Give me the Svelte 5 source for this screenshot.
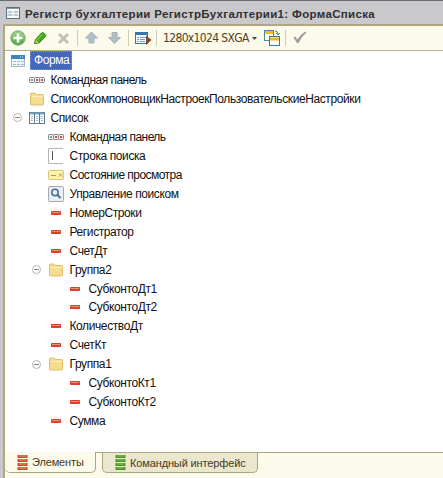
<script>
  const rows = [
    { d: 0, icon: 'form', text: 'Форма', selected: true },
    { d: 1, icon: 'bar', text: 'Командная панель', tight: true },
    { d: 1, icon: 'folder', text: 'СписокКомпоновщикНастроекПользовательскиеНастройки' },
    { d: 1, icon: 'list', text: 'Список', open: true },
    { d: 2, icon: 'bar', text: 'Командная панель', tight: true },
    { d: 2, icon: 'input', text: 'Строка поиска' },
    { d: 2, icon: 'state', text: 'Состояние просмотра', tight: true },
    { d: 2, icon: 'search', text: 'Управление поиском' },
    { d: 2, icon: 'field', text: 'НомерСтроки' },
    { d: 2, icon: 'field', text: 'Регистратор' },
    { d: 2, icon: 'field', text: 'СчетДт' },
    { d: 2, icon: 'folder', text: 'Группа2', open: true },
    { d: 3, icon: 'field', text: 'СубконтоДт1' },
    { d: 3, icon: 'field', text: 'СубконтоДт2' },
    { d: 2, icon: 'field', text: 'КоличествоДт' },
    { d: 2, icon: 'field', text: 'СчетКт' },
    { d: 2, icon: 'folder', text: 'Группа1', open: true },
    { d: 3, icon: 'field', text: 'СубконтоКт1' },
    { d: 3, icon: 'field', text: 'СубконтоКт2' },
    { d: 2, icon: 'field', text: 'Сумма' }
  ];
</script>

{#snippet icon(name)}
  <svg class="icon" width="16" height="16" viewBox="0 0 16 16">
    {#if name === 'form'}
      <rect x="1.5" y="2.5" width="13" height="11" fill="#eef6fa" stroke="#a3bac6" />
      <rect x="1" y="2" width="14" height="4" fill="#3c85bd" />
      <path d="M10 4h1m1 0h1" stroke="#d9eefb" />
      <path d="M3 8.5h3m1 0h3m1 0h3M3 11.500h3m1 0h3m1 0h3" stroke="#9bbccc" />
    {:else if name === 'bar'}
      {#each [['#6d9fc0', 0], ['#c8503a', 5], ['#c8503a', 10]] as [color, x]}
        <rect x={x + 0.5} y="5.500" width="5" height="5" rx="1" fill="#f4f0ee" stroke="#858085" />
        <rect x={x + 2} y="7" width="2" height="2" fill={color} />
      {/each}
    {:else if name === 'folder'}
      <path d="M1.500 13v-10q0-1 1-1h3.500l1.500 1.500h6q1 0 1 1v8.500q0 1-1 1h-11q-1 0-1-1z" fill="#f5dc8e" stroke="#dcbd68" />
      <path d="M2.500 5.500h11" stroke="#fff1bd" />
    {:else if name === 'list'}
      <rect x=".5" y="2.500" width="15" height="11" fill="#fff" stroke="#5b7f9a" />
      <path d="M1 3.500h14" stroke="#7ba5c2" stroke-width="2" />
      <path d="M5.500 3v11M10.500 3v11" stroke="#5b7f9a" />
      <path d="M2 6.500h2m3 0h2m3 0h2M2 8.500h2m3 0h2m3 0h2M2 10.500h2m3 0h2m3 0h2" stroke="#a9b9c4" />
    {:else if name === 'input'}
      <path d="M15 .5H.5v15H15" fill="none" stroke="#b5b5b5" />
      <path d="M4.500 3v9" stroke="#555" />
    {:else if name === 'state'}
      <rect x=".5" y="3.500" width="15" height="9" rx="1.500" fill="#fff3ab" stroke="#dac574" />
      <path d="M3 8.500h5m3-2 3 3m0-3-3 3" fill="none" stroke="#b19c55" />
    {:else if name === 'search'}
      <rect x=".5" y=".5" width="15" height="15" rx="1" fill="#eceff1" stroke="#a3a9ad" />
      <circle cx="7" cy="6.500" r="3.200" fill="#e4f2fa" stroke="#446f96" stroke-width="1.500" />
      <path d="m9.500 9 3 3" stroke="#446f96" stroke-width="2" />
    {:else if name === 'field'}
      <rect x="3" y="6" width="10" height="4" rx=".7" fill="#d9402a" />
      <path d="M4 7.500h8" stroke="#f08d76" />
    {/if}
  </svg>
{/snippet}

{#snippet stack(color, light)}
  <svg width="11" height="15" viewBox="0 0 11 15">
    {#each [0, 4, 8, 12] as y}
      <rect x=".5" y={y} width="10" height="3" rx=".5" fill={color} />
      <path d={`M2 ${y + 1}h7`} stroke={light} />
    {/each}
  </svg>
{/snippet}

<div class="window">
  <header>
    <svg width="14" height="12" viewBox="0 0 14 12">
      <rect x=".5" y=".5" width="13" height="11" fill="#f8fafa" stroke="#557487" />
      <path d="M1 1.500h12" stroke="#8299a6" />
      <path d="M2 5.500l1-1 1 1 1-1 1 1m2 0 1-1 1 1 1-1 1 1M2 8.500l1-1 1 1 1-1 1 1m2 0 1-1 1 1 1-1 1 1" fill="none" stroke="#668394" />
    </svg>
    <h1>Регистр бухгалтерии РегистрБухгалтерии1: ФормаСписка</h1>
  </header>
  <main>
    <nav>
      <svg class="tools" width="154" height="22" viewBox="6 27 154 22">
        <defs>
          <linearGradient id="green" x2="0" y2="1"><stop stop-color="#a5d887" /><stop offset="1" stop-color="#4ba44a" /></linearGradient>
        </defs>
        <circle cx="18" cy="38" r="7.200" fill="url(#green)" stroke="#86a47a" />
        <path d="M18 33.500v9M13.500 38h9" stroke="#fff" stroke-width="2.600" />
        <path d="m34.500 43.500 1-4 6-6.500q1-1 2 0l1.800 1.600q1 1 0 2l-6.300 6.400z" fill="#43ae18" stroke="#278512" />
        <path d="m35 43 1-3 3 2.700z" fill="#e2bb68" />
        <path d="m37 40 5-5.500" stroke="#8fd95c" />
        <path d="m59 34 9 9m0-9-9 9" stroke="#c6bbb6" stroke-width="2.800" />
        <path d="M77.500 30v16M128.500 30v16M156.500 30v16" stroke="#cfcdb8" />
        <path d="m91.500 32 6 6h-3.500v5h-5v-5h-3.500z" fill="#b1bec8" stroke="#9fb1bd" />
        <path d="m114.500 43.500-6-6h3.500v-5h5v5h3.500z" fill="#b1bec8" stroke="#9fb1bd" />
        <rect x="135.500" y="32.500" width="12" height="11" fill="#f8fbff" stroke="#39759e" />
        <path d="M135 33.500h13" stroke="#3978ab" stroke-width="3" />
        <path d="M137 37.500h2m1 0h6m-9 2h2m1 0h5m-8 2h2m1 0h5" stroke="#719eb8" />
        <path d="m146 35.500 5.500 4.500-5.500 5z" fill="#7a4930" />
      </svg>
      <span class="resolution">1280x1024 SXGA</span>
      <svg class="right" width="65" height="22" viewBox="250 27 65 22">
        <path d="M252 37h5l-2.500 3z" fill="#4d4520" />
        <rect x="264.500" y="30.500" width="9" height="10" fill="#fffdf3" stroke="#4687ac" />
        <path d="M265 32.500h8" stroke="#f2bd27" stroke-width="3" />
        <rect x="269.500" y="36.500" width="10" height="9" fill="#fff" stroke="#327ca9" />
        <path d="M270 39h9" stroke="#f1b71d" stroke-width="3" />
        <path d="M275 31q3 0 3 3m-2-1 2 2 2-2" fill="none" stroke="#49935b" />
        <path d="M285.500 30v16" stroke="#cfcdb8" />
        <path d="m293.500 37.500 1.500-1 2.500 3q4-6 8-8l1 1q-5 4-8 10.500h-1.500z" fill="#a6989c" />
      </svg>
    </nav>
    <section>
      {#each rows as row}
        <div class="row depth{row.d}">
          <span class="toggle">
            {#if row.open}
              <svg width="9" height="9" viewBox="0 0 9 9"><circle cx="4.500" cy="4.500" r="4" fill="#fff" stroke="#b5b5b5" /><path d="M2 4.500h5" stroke="#888" /></svg>
            {/if}
          </span>
          {@render icon(row.icon)}
          <span class="label" class:tight={row.tight} class:selected={row.selected}>{row.text}</span>
        </div>
      {/each}
    </section>
    <footer>
      <div class="tab active">{@render stack('#d8432d', '#f4967d')}<span>Элементы</span></div>
      <div class="tab second">{@render stack('#489526', '#8bc667')}<span>Командный интерфейс</span></div>
    </footer>
  </main>
</div>

<style>
  :global(body) { margin: 0; }
  * { box-sizing: border-box; }
  .window { width: 443px; height: 478px; overflow: hidden; display: flex; flex-direction: column; background: #c9c9cb; border-top: 1px solid #6c6a6e; font-family: 'Liberation Sans', Arial, sans-serif; }
  header { height: 23px; flex: none; display: flex; align-items: center; padding: 1px 0 0 6px; }
  h1 { margin: 1px 0 0 5px; font-size: 11.500px; line-height: 16px; letter-spacing: .33px; white-space: nowrap; color: #303033; }
  main { flex: 1; margin-left: 3px; border-left: 2px solid #b0a67f; border-top: 2px solid #b0a67f; background: #fcfaeb; display: flex; flex-direction: column; min-height: 0; }
  nav { height: 25px; flex: none; display: flex; align-items: center; padding-left: 1px; border-bottom: 1px solid #b5ae89; }
  nav svg { flex: none; }
  .resolution { width: 87px; margin-left: 3px; font: 12px 'DejaVu Sans Condensed', 'DejaVu Sans', sans-serif; font-stretch: condensed; letter-spacing: -.65px; color: #51441b; white-space: nowrap; }
  section { height: 401px; flex: none; padding-top: .4px; background: #fff; }
  .row { height: 18.970px; display: flex; align-items: center; white-space: nowrap; font-size: 12px; color: #111; }
  .toggle { display: flex; }
  .depth0 { padding-left: 5px; }
  .depth0 .toggle { width: 0; }
  .depth1 { padding-left: 8px; }
  .depth1 .toggle { width: 16px; }
  .depth2 { padding-left: 27px; }
  .depth2 .toggle { width: 16px; }
  .depth3 { padding-left: 46px; }
  .depth3 .toggle { width: 16px; }
  .icon { flex: none; }
  .label { margin-left: 5.500px; line-height: 16px; letter-spacing: -.4px; }
  .tight { letter-spacing: -.54px; }
  .selected { margin-left: 4px; padding: 0 3px 0 4px; height: 19px; line-height: 19px; background: #4568bd; color: #fff; outline: 1px dotted #8599cd; outline-offset: -1px; }
  footer { flex: 1; border-top: 1px solid #aaa783; display: flex; align-items: flex-start; }
  .tab { height: 20px; display: flex; align-items: center; border: 1px solid #aaa783; border-top: 0; border-radius: 0 0 5px 5px; font: 11px 'Liberation Sans', sans-serif; letter-spacing: -.13px; color: #45391b; white-space: nowrap; }
  .active { margin-top: -1px; width: 91px; height: 21px; background: #fcfaeb; border-left: 0; padding-left: 12px; }
  .tab span { margin-left: 4px; }
  .second { margin-left: 6px; width: 156px; background: #ebe7cf; padding-left: 12px; }
</style>
